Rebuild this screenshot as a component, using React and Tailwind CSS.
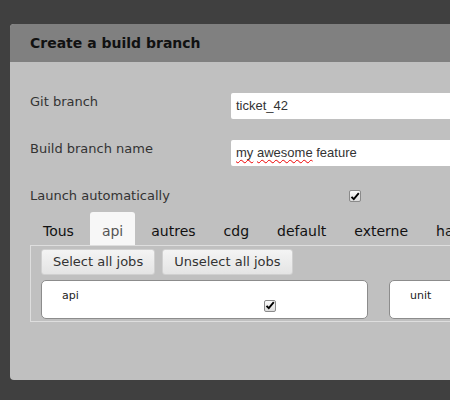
import React from 'react';

const Check = () => (
    <span className="inline-flex items-center justify-center w-[12px] h-[12px] rounded-[2px] border border-[#8a8a8a] bg-gradient-to-b from-[#fcfcfc] to-[#dcdcdc]">
        <svg width="10" height="9" viewBox="0 0 10 9">
            <path d="M1.5 4.8 L3.8 7.2 L8.8 1.2" fill="none" stroke="#000" strokeWidth="1.9" />
        </svg>
    </span>
);

const tabs = ['Tous', 'api', 'autres', 'cdg', 'default', 'externe', 'hardware'];

export default function App() {
    return (
        <div className="w-[450px] h-[400px] overflow-hidden bg-[#404040] pt-[24px] pl-[10px] font-['DejaVu_Sans',sans-serif]">
            <div className="w-[760px] h-[356px] rounded-l-[4px] overflow-hidden bg-[#c0c0c0] flex flex-col">
                <div className="h-[38px] bg-[#808080] flex items-center pl-[20px]">
                    <h1 className="text-[14px] font-bold text-[#111]">Create a build branch</h1>
                </div>

                <div className="pl-[20px] pt-[31px] flex flex-col">
                    <div className="flex h-[26px]">
                        <label className="w-[201px] text-[13px] text-[#333] leading-[16px] mt-[1px]">Git branch</label>
                        <div className="w-[300px] h-[26px] bg-white rounded-[2px] flex items-center pl-[5px] text-[13px] text-[#333] font-['Liberation_Sans',Arial,sans-serif]">
                            ticket_42
                        </div>
                    </div>

                    <div className="flex h-[26px] mt-[21px]">
                        <label className="w-[201px] text-[13px] text-[#333] leading-[16px] mt-[1px]">Build branch name</label>
                        <div className="w-[300px] h-[26px] bg-white rounded-[2px] flex items-center pl-[5px] text-[13px] text-[#333] font-['Liberation_Sans',Arial,sans-serif]">
                            <span className="underline decoration-wavy decoration-[#e00] decoration-1 underline-offset-2">my</span>
                            &nbsp;
                            <span className="underline decoration-wavy decoration-[#e00] decoration-1 underline-offset-2">awesome</span>
                            &nbsp;feature
                        </div>
                    </div>

                    <div className="flex items-center h-[16px] mt-[22px]">
                        <label className="w-[319px] text-[13px] text-[#333] leading-[16px]">Launch automatically</label>
                        <Check />
                    </div>

                    <div className="flex gap-[4px] mt-[8px] pl-[1px] h-[33px]">
                        {tabs.map((t) => (
                            <div
                                key={t}
                                className={
                                    t === 'api'
                                        ? 'px-[12px] pt-[5px] flex items-center text-[14px] text-[#555] bg-[#f7f7f7] rounded-t-[3px]'
                                        : 'px-[12px] pt-[5px] flex items-center text-[14px] text-[#111]'
                                }
                            >
                                {t}
                            </div>
                        ))}
                    </div>

                    <div className="border border-[#dedede] pl-[10px] pt-[3px] pb-[2px]">
                        <div className="flex gap-[7px]">
                            <button className="h-[26px] px-[11px] text-[13px] text-[#333] rounded-[3px] border border-[#d0d0d0] bg-gradient-to-b from-[#f4f4f4] to-[#e4e4e4]">
                                Select all jobs
                            </button>
                            <button className="h-[26px] px-[11px] text-[13px] text-[#333] rounded-[3px] border border-[#d0d0d0] bg-gradient-to-b from-[#f4f4f4] to-[#e4e4e4]">
                                Unselect all jobs
                            </button>
                        </div>
                        <div className="flex gap-[21px] mt-[5px]">
                            <div className="w-[327px] shrink-0 h-[39px] bg-white border border-[#8c8c8c] rounded-[5px] flex pl-[20px]">
                                <span className="w-[202px] text-[11px] text-[#222] pt-[7px]">api</span>
                                <div className="pt-[12px]">
                                    <Check />
                                </div>
                            </div>
                            <div className="w-[327px] shrink-0 h-[39px] bg-white border border-[#8c8c8c] rounded-[5px] flex pl-[20px]">
                                <span className="text-[11px] text-[#222] pt-[7px]">unit</span>
                            </div>
                        </div>
                    </div>
                </div>
            </div>
        </div>
    );
}
